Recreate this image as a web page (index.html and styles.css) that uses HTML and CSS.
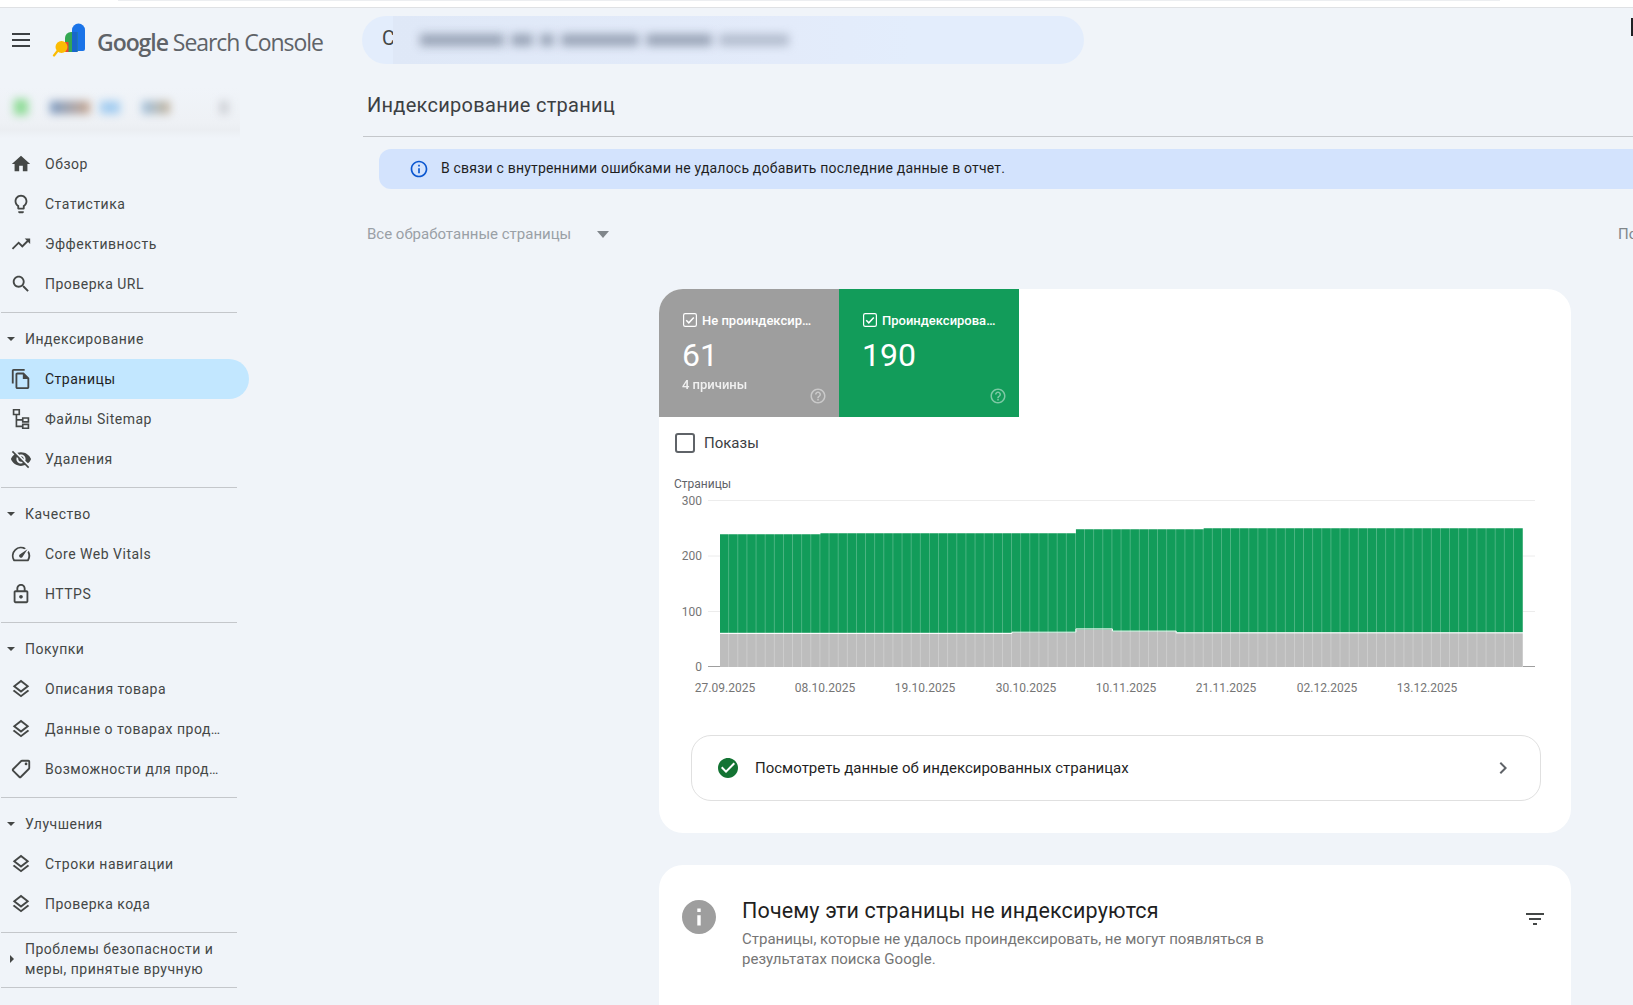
FILE: index.html
```html
<!DOCTYPE html>
<html lang="ru">
<head>
<meta charset="utf-8">
<title>Индексирование страниц</title>
<link rel="stylesheet" href="styles.css">
</head>
<body>
<svg class="sprite" aria-hidden="true">
  <symbol id="layers" viewBox="0 0 24 24"><path d="M11.99 18.54l-7.37-5.73L3 14.07l9 7 9-7-1.63-1.27-7.38 5.74zM12 16l7.36-5.73L21 9l-9-7-9 7 1.63 1.27L12 16zm0-11.47L17.74 9 12 13.47 6.26 9 12 4.53z"/></symbol>
  <symbol id="help" viewBox="0 0 24 24"><path d="M11 18h2v-2h-2v2zm1-16C6.48 2 2 6.48 2 12s4.48 10 10 10 10-4.48 10-10S17.52 2 12 2zm0 18c-4.41 0-8-3.59-8-8s3.59-8 8-8 8 3.59 8 8-3.59 8-8 8zm0-14c-2.21 0-4 1.79-4 4h2c0-1.1.9-2 2-2s2 .9 2 2c0 2-3 1.75-3 5h2c0-2.25 3-2.5 3-5 0-2.21-1.79-4-4-4z"/></symbol>
  <symbol id="tick" viewBox="0 0 14 14"><rect x=".6" y=".6" width="12.8" height="12.8" rx="1.6" fill="none" stroke="#fff" stroke-width="1.2"/><path d="M3.2 7.2l2.6 2.6 5-5.4" fill="none" stroke="#fff" stroke-width="1.5"/></symbol>
</svg>

<div class="tabstrip"><div class="tabstrip-shade"></div></div>

<header class="topbar">
  <div class="brand">
    <div class="burger"><span></span><span></span><span></span></div>
    <svg class="logo" viewBox="0 0 34 34" aria-hidden="true">
      <path d="M20 8a6.5 6.5 0 0 1 13 0v19a2 2 0 0 1-2 2H20z" fill="#1a73e8" transform="translate(0 -1)"/>
      <path d="M13 15a6 6 0 0 1 6-6h6.5v20H13z" fill="#34a853"/>
      <path d="M20 9h5.500v20H20z" fill="#1967c9"/>
      <path d="M13 19h3.500v10H13z" fill="#ea4335"/>
      <circle cx="9.500" cy="24" r="6" fill="#fbbc04"/>
      <path d="M5.500 28L2 32.500" stroke="#fbbc04" stroke-width="2.200" stroke-linecap="round"/>
    </svg>
    <div class="brand-name"><span class="brand-google">Google</span> Search Console</div>
  </div>
  <div class="search">
    <span class="search-letter">C</span>
    <div class="search-blur">
      <i class="blob blob-a"></i><i class="blob blob-b"></i><i class="blob blob-c"></i><i class="blob blob-d"></i><i class="blob blob-e"></i><i class="blob blob-f"></i>
    </div>
  </div>
  <div class="caret"></div>
</header>

<div class="app">
  <nav class="sidebar">
    <div class="account">
      <i class="acc acc-green"></i><i class="acc acc-a"></i><i class="acc acc-b"></i><i class="acc acc-c"></i><i class="acc acc-d"></i>
    </div>

    <a class="item"><svg class="icon" viewBox="0 0 24 24"><path d="M10 20v-6h4v6h5v-8h3L12 3 2 12h3v8z"/></svg><span class="label">Обзор</span></a>
    <a class="item"><svg class="icon" viewBox="0 0 24 24"><path d="M9 21c0 .55.45 1 1 1h4c.55 0 1-.45 1-1v-1H9v1zm3-19C8.140 2 5 5.140 5 9c0 2.380 1.190 4.470 3 5.740V17c0 .55.45 1 1 1h6c.55 0 1-.45 1-1v-2.260c1.810-1.270 3-3.360 3-5.740 0-3.860-3.140-7-7-7zm2.850 11.100l-.85.6V16h-4v-2.300l-.85-.6C7.800 12.160 7 10.630 7 9c0-2.760 2.240-5 5-5s5 2.240 5 5c0 1.630-.8 3.160-2.150 4.100z"/></svg><span class="label">Статистика</span></a>
    <a class="item"><svg class="icon" viewBox="0 0 24 24"><path d="M16 6l2.290 2.290-4.880 4.880-4-4L2 16.590 3.410 18l6-6 4 4 6.300-6.290L22 12V6z"/></svg><span class="label">Эффективность</span></a>
    <a class="item"><svg class="icon" viewBox="0 0 24 24"><path d="M15.500 14h-.79l-.28-.27C15.410 12.590 16 11.110 16 9.500 16 5.910 13.090 3 9.500 3S3 5.910 3 9.500 5.910 16 9.500 16c1.610 0 3.090-.59 4.230-1.570l.27.28v.79l5 4.990L20.490 19l-4.990-5zm-6 0C7.010 14 5 11.990 5 9.500S7.010 5 9.500 5 14 7.010 14 9.500 11.990 14 9.500 14z"/></svg><span class="label">Проверка URL</span></a>

    <hr class="rule">
    <div class="group"><i class="tri-down"></i><span>Индексирование</span></div>
    <a class="item active"><svg class="icon" viewBox="0 0 24 24"><path d="M16 1H4c-1.100 0-2 .9-2 2v14h2V3h12V1zm-1 4H8c-1.100 0-1.990.9-1.990 2L6 21c0 1.100.89 2 1.990 2H19c1.100 0 2-.9 2-2V11l-6-6zM8 21V7h6v5h5v9H8z"/></svg><span class="label">Страницы</span></a>
    <a class="item"><svg class="icon" viewBox="0 0 24 24"><path fill="none" stroke="#444746" stroke-width="1.800" d="M3.900 1.900h6.200v5.200H3.900zM13.900 10.900h6.200v4.200h-6.200zM13.900 17.900h6.200v4.200h-6.200zM7 7v13h6.900M7 13h6.900"/></svg><span class="label">Файлы Sitemap</span></a>
    <a class="item"><svg class="icon" viewBox="0 0 24 24"><path d="M12 7c2.760 0 5 2.240 5 5 0 .65-.13 1.260-.36 1.830l2.920 2.920c1.510-1.260 2.700-2.890 3.430-4.750-1.730-4.390-6-7.500-11-7.500-1.400 0-2.740.25-3.980.7l2.160 2.160C10.740 7.130 11.350 7 12 7zM2 4.270l2.280 2.280.46.46C3.080 8.300 1.780 10.020 1 12c1.730 4.390 6 7.500 11 7.500 1.550 0 3.030-.3 4.380-.84l.42.42L19.730 22 21 20.730 3.270 3 2 4.270zM7.530 9.800l1.550 1.550c-.05.21-.08.43-.08.65 0 1.660 1.340 3 3 3 .22 0 .44-.03.65-.08l1.550 1.550c-.67.33-1.410.53-2.200.53-2.760 0-5-2.240-5-5 0-.79.2-1.530.53-2.200zm4.310-.78l3.150 3.150.02-.16c0-1.660-1.340-3-3-3l-.17.01z"/></svg><span class="label">Удаления</span></a>

    <hr class="rule">
    <div class="group"><i class="tri-down"></i><span>Качество</span></div>
    <a class="item"><svg class="icon" viewBox="0 0 24 24"><path d="M20.380 8.570l-1.230 1.850a8 8 0 0 1-.22 7.580H5.070A8 8 0 0 1 15.580 6.850l1.850-1.230A10 10 0 0 0 3.350 19a2 2 0 0 0 1.720 1h13.850a2 2 0 0 0 1.740-1 10 10 0 0 0-.27-10.440zm-9.790 6.840a2 2 0 0 0 2.830 0l5.660-8.490-8.490 5.660a2 2 0 0 0 0 2.830z"/></svg><span class="label">Core Web Vitals</span></a>
    <a class="item"><svg class="icon" viewBox="0 0 24 24"><path d="M18 8h-1V6c0-2.760-2.240-5-5-5S7 3.240 7 6v2H6c-1.100 0-2 .9-2 2v10c0 1.100.9 2 2 2h12c1.100 0 2-.9 2-2V10c0-1.100-.9-2-2-2zM9 6c0-1.660 1.340-3 3-3s3 1.340 3 3v2H9V6zm9 14H6V10h12v10zm-6-3c1.100 0 2-.9 2-2s-.9-2-2-2-2 .9-2 2 .9 2 2 2z"/></svg><span class="label">HTTPS</span></a>

    <hr class="rule">
    <div class="group"><i class="tri-down"></i><span>Покупки</span></div>
    <a class="item"><svg class="icon"><use href="#layers"/></svg><span class="label">Описания товара</span></a>
    <a class="item"><svg class="icon"><use href="#layers"/></svg><span class="label">Данные о товарах продавца</span></a>
    <a class="item"><svg class="icon icon-flip" viewBox="0 0 24 24"><path d="M21.410 11.580l-9-9C12.050 2.220 11.550 2 11 2H4c-1.100 0-2 .9-2 2v7c0 .55.22 1.050.59 1.420l9 9c.36.36.86.58 1.410.58s1.050-.22 1.410-.59l7-7c.37-.36.59-.86.59-1.410s-.23-1.060-.59-1.420zM13 20.010L4 11V4h7v-.01l9 9-7 7.020z"/><circle cx="6.500" cy="6.500" r="1.500"/></svg><span class="label">Возможности для продавцов</span></a>

    <hr class="rule">
    <div class="group"><i class="tri-down"></i><span>Улучшения</span></div>
    <a class="item"><svg class="icon"><use href="#layers"/></svg><span class="label">Строки навигации</span></a>
    <a class="item"><svg class="icon"><use href="#layers"/></svg><span class="label">Проверка кода</span></a>

    <hr class="rule">
    <div class="group"><i class="tri-right"></i><span>Проблемы безопасности и<br>меры, принятые вручную</span></div>
    <hr class="rule rule-last">
  </nav>

  <main class="main">
    <h1 class="title">Индексирование страниц</h1>
    <div class="banner">
      <svg class="banner-icon" viewBox="0 0 24 24"><path d="M11 7h2v2h-2zm0 4h2v6h-2zm1-9C6.480 2 2 6.480 2 12s4.480 10 10 10 10-4.480 10-10S17.520 2 12 2zm0 18c-4.410 0-8-3.590-8-8s3.590-8 8-8 8 3.590 8 8-3.590 8-8 8z"/></svg>
      <span class="banner-text">В связи с внутренними ошибками не удалось добавить последние данные в отчет.</span>
    </div>
    <div class="filter">
      <span class="filter-name">Все обработанные страницы</span>
      <i class="filter-tri"></i>
      <span class="filter-right">По</span>
    </div>

    <section class="card">
      <div class="tabs">
        <div class="tab tab-gray">
          <div class="tab-head"><svg class="tab-check"><use href="#tick"/></svg><span class="tab-name">Не проиндексировано</span></div>
          <div class="tab-num">61</div>
          <div class="tab-sub">4 причины</div>
          <svg class="tab-help"><use href="#help"/></svg>
        </div>
        <div class="tab tab-green">
          <div class="tab-head"><svg class="tab-check"><use href="#tick"/></svg><span class="tab-name">Проиндексировано</span></div>
          <div class="tab-num">190</div>
          <svg class="tab-help"><use href="#help"/></svg>
        </div>
      </div>

      <label class="impressions"><i class="box"></i><span>Показы</span></label>

      <svg class="chart" viewBox="0 0 912 240" width="912" height="240">
        <defs>
          <pattern id="gaps" x="61" y="0" width="9.125" height="240" patternUnits="userSpaceOnUse">
            <rect x="8.400" width=".8" height="240" fill="#fff" fill-opacity=".32"/>
          </pattern>
        </defs>
        <text class="c-title" x="15" y="15">Страницы</text>
        <g class="c-grid">
          <path d="M49 27.500H876M49 83H876M49 138.500H876"/>
        </g>
        <path class="c-axis" d="M49 193.500H876"/>
        <g class="c-y">
          <text x="43" y="32">300</text>
          <text x="43" y="87">200</text>
          <text x="43" y="143">100</text>
          <text x="43" y="198">0</text>
        </g>
        <polygon class="c-green" points="61,61.300 161.400,61.300 161.400,60.200 416.900,60.200 416.900,56.300 544.600,56.300 544.600,55.200 864,55.200 864,160 61,160"/>
        <polygon class="c-gray" points="61,160.800 353,160.800 353,159.700 416.900,159.700 416.900,156.400 453.400,156.400 453.400,158.600 517.200,158.600 517.200,160.200 864,160.200 864,194 61,194"/>
        <polyline class="c-sep" points="61,160.300 353,160.300 353,159.200 416.900,159.200 416.900,155.900 453.400,155.900 453.400,158.100 517.200,158.100 517.200,159.700 864,159.700"/>
        <rect x="61" y="55" width="803" height="139" fill="url(#gaps)"/>
        <g class="c-x">
          <text x="66" y="219">27.09.2025</text>
          <text x="166" y="219">08.10.2025</text>
          <text x="266" y="219">19.10.2025</text>
          <text x="367" y="219">30.10.2025</text>
          <text x="467" y="219">10.11.2025</text>
          <text x="567" y="219">21.11.2025</text>
          <text x="668" y="219">02.12.2025</text>
          <text x="768" y="219">13.12.2025</text>
        </g>
      </svg>

      <a class="link-row">
        <svg class="link-ok" viewBox="2 2 20 20"><path d="M12 2C6.480 2 2 6.480 2 12s4.480 10 10 10 10-4.480 10-10S17.520 2 12 2zm-2 15l-5-5 1.410-1.410L10 14.170l7.590-7.590L19 8l-9 9z"/></svg>
        <span class="link-text">Посмотреть данные об индексированных страницах</span>
        <svg class="link-chev" viewBox="0 0 24 24"><path d="M10 6L8.590 7.410 13.170 12l-4.580 4.590L10 18l6-6z"/></svg>
      </a>
    </section>

    <section class="card card-why">
      <svg class="why-icon" viewBox="2 2 20 20"><path d="M12 2C6.480 2 2 6.480 2 12s4.480 10 10 10 10-4.480 10-10S17.520 2 12 2zm1 15h-2v-6h2v6zm0-8h-2V7h2v2z"/></svg>
      <div class="why-body">
        <h2 class="why-title">Почему эти страницы не индексируются</h2>
        <p class="why-text">Страницы, которые не удалось проиндексировать, не могут появляться в результатах поиска Google.</p>
      </div>
      <svg class="why-filter" viewBox="0 0 24 24"><path d="M10 18h4v-2h-4v2zM3 6v2h18V6H3zm3 7h12v-2H6v2z"/></svg>
    </section>
  </main>
</div>
</body>
</html>
```

FILE: styles.css
```css
* { box-sizing: border-box; }

html, body {
  margin: 0;
  height: 1005px;
  overflow: hidden;
  background: #f0f4f9;
  font-family: Roboto, "Noto Sans", sans-serif;
  color: #1f1f1f;
}

.sprite { display: none; }

/* browser strip */
.tabstrip {
  height: 8px;
  background: #fff;
  border-bottom: 1px solid #dfe1e4;
}
.tabstrip-shade {
  height: 1px;
  margin: 0 133px 0 118px;
  background: #eceef1;
}

/* top bar */
.topbar {
  display: flex;
  align-items: center;
  height: 64px;
  position: relative;
}
.brand {
  display: flex;
  align-items: center;
  width: 362px;
  padding-left: 12px;
}
.burger {
  display: flex;
  flex-direction: column;
  gap: 4px;
  width: 18px;
}
.burger span {
  display: block;
  height: 2px;
  background: #3c4043;
}
.logo {
  width: 34px;
  height: 34px;
  margin-left: 22px;
  flex: none;
}
.brand-name {
  margin: 4px 0 0 11px;
  font-family: "Open Sans", sans-serif;
  font-size: 23px;
  letter-spacing: -1.05px;
  color: #5f6368;
  white-space: nowrap;
}
.brand-google { font-weight: 600; }

.search {
  display: flex;
  align-items: center;
  width: 722px;
  height: 48px;
  border-radius: 24px;
  background: #e3edfc;
  padding-left: 20px;
  overflow: hidden;
}
.search-letter {
  width: 11px;
  height: 24px;
  margin-top: -4px;
  overflow: hidden;
  font-size: 20px;
  line-height: 24px;
  color: #444746;
}
.search-blur {
  display: flex;
  align-items: center;
  gap: 7px;
  width: 520px;
  height: 48px;
  padding-left: 27px;
  background: linear-gradient(90deg, #dfe8f7, #e3ebfa 75%, #e3edfc);
}
.blob {
  display: block;
  height: 12px;
  background: #8d98ab;
  filter: blur(5px);
  opacity: .85;
}
.blob-a { width: 84px; }
.blob-b { width: 22px; }
.blob-c { width: 14px; }
.blob-d { width: 78px; }
.blob-e { width: 66px; }
.blob-f { width: 70px; opacity: .55; }

.caret {
  position: absolute;
  right: 0;
  top: 10px;
  width: 2px;
  height: 18px;
  background: #202124;
}

/* layout */
.app {
  display: flex;
  height: 933px;
}
.sidebar {
  flex: none;
  width: 363px;
  overflow: hidden;
}
.main {
  flex: 1;
  min-width: 0;
  overflow: hidden;
}

/* sidebar */
.account {
  display: flex;
  align-items: center;
  width: 240px;
  height: 72px;
  padding: 0 0 2px 14px;
  background: linear-gradient(180deg, #f0f4f9 20%, #eef1f5 70%, #ebeef2 80%, #f0f4f9 92%);
}
.acc {
  display: block;
  height: 13px;
  filter: blur(4.5px);
}
.acc-green { width: 14px; height: 16px; background: #8fdc97; }
.acc-a { width: 40px; margin-left: 22px; background: linear-gradient(90deg, #7b9cc4, #c7a58e); }
.acc-b { width: 20px; margin-left: 10px; background: #a4cdf0; }
.acc-c { width: 28px; margin-left: 22px; background: linear-gradient(90deg, #9fc0de, #c4b49c); }
.acc-d { width: 8px; margin-left: 50px; background: #c9ccd1; }

.item {
  display: flex;
  align-items: center;
  gap: 13px;
  width: 249px;
  height: 40px;
  padding: 0 24px 0 10px;
  border-radius: 0 20px 20px 0;
  color: #444746;
  font-size: 14px;
  letter-spacing: .5px;
}
.item.active { background: #c2e7ff; color: #1f1f1f; }
.icon {
  flex: none;
  width: 22px;
  height: 22px;
  fill: #444746;
}
.icon-flip { transform: scaleX(-1); }
.label {
  min-width: 0;
  overflow: hidden;
  white-space: nowrap;
  text-overflow: ellipsis;
}
.rule {
  width: 236px;
  height: 1px;
  margin: 8px 0 6px 1px;
  border: 0;
  background: #c4c7cb;
}
.rule-last { margin-bottom: 0; }
.group {
  display: flex;
  align-items: center;
  min-height: 40px;
  padding-left: 7px;
  color: #444746;
  font-size: 14px;
  line-height: 20px;
  letter-spacing: .5px;
}
.group span { margin-left: 10px; }
.tri-down {
  flex: none;
  width: 0;
  height: 0;
  margin-right: 0;
  border-left: 4px solid transparent;
  border-right: 4px solid transparent;
  border-top: 4px solid #444746;
}
.tri-right {
  flex: none;
  width: 0;
  height: 0;
  margin-left: 3px;
  margin-right: 5px;
  border-top: 4px solid transparent;
  border-bottom: 4px solid transparent;
  border-left: 4px solid #444746;
}
.group .tri-right + span { margin-left: 6px; }

/* main head */
.title {
  margin: 0;
  height: 65px;
  padding: 20px 0 0 4px;
  border-bottom: 1px solid #c4c7cb;
  font-size: 20px;
  font-weight: 400;
  line-height: 26px;
  letter-spacing: .28px;
  color: #3c4043;
}
.banner {
  display: flex;
  align-items: center;
  height: 40px;
  margin: 12px 0 0 16px;
  padding-left: 30px;
  border-radius: 12px 0 0 12px;
  background: #d3e3fd;
  font-size: 14px;
  letter-spacing: .2px;
  color: #1f1f1f;
}
.banner-text { margin-top: -2px; }
.banner-icon {
  width: 20px;
  height: 20px;
  margin-right: 12px;
  fill: #0b57d0;
}
.filter {
  display: flex;
  align-items: center;
  height: 48px;
  margin-top: 21px;
  padding-left: 4px;
}
.filter-name {
  font-size: 15px;
  color: #9aa0a6;
}
.filter-tri {
  width: 0;
  height: 0;
  margin-left: 26px;
  border-left: 6.500px solid transparent;
  border-right: 6.500px solid transparent;
  border-top: 7px solid #80868b;
}
.filter-right {
  margin-left: auto;
  font-size: 15px;
  color: #80868b;
  width: 15px;
  overflow: hidden;
  white-space: nowrap;
}

/* report card */
.card {
  width: 912px;
  margin: 31px 0 0 296px;
  padding-bottom: 32px;
  border-radius: 24px;
  background: #fff;
}
.tabs { display: flex; }
.tab {
  position: relative;
  display: flex;
  flex-direction: column;
  width: 180px;
  height: 128px;
  padding: 22px 20px 0 24px;
  color: #fff;
}
.tab-gray { background: #9e9e9e; border-top-left-radius: 24px; padding-right: 22px; }
.tab-green { background: #129c5a; }
.tab-head {
  display: flex;
  align-items: center;
  gap: 5px;
  height: 18px;
}
.tab-check { flex: none; width: 14px; height: 14px; }
.tab-name {
  min-width: 0;
  overflow: hidden;
  white-space: nowrap;
  text-overflow: ellipsis;
  font-size: 13px;
  font-weight: 500;
}
.tab-num {
  margin: 5px 0 0 -1px;
  font-size: 32px;
  line-height: 42px;
}
.tab-sub {
  margin: 1px 0 0 -1px;
  font-size: 13px;
  font-weight: 500;
  line-height: 16px;
  opacity: .85;
}
.tab-help {
  position: absolute;
  right: 12px;
  bottom: 12px;
  width: 18px;
  height: 18px;
  fill: #fff;
  opacity: .45;
}
.impressions {
  display: flex;
  align-items: center;
  gap: 9px;
  margin: 16px 0 0 16px;
  height: 20px;
  font-size: 15px;
  color: #3c4043;
}
.box {
  width: 20px;
  height: 20px;
  border: 2px solid #5f6368;
  border-radius: 3px;
}
.chart {
  display: block;
  margin-top: 20px;
  font-family: Roboto, sans-serif;
}
.c-title { font-size: 12px; fill: #5f6368; }
.c-grid path { stroke: #ececec; stroke-width: 1; fill: none; }
.c-axis { stroke: #9e9e9e; stroke-width: 1; fill: none; }
.c-y text { font-size: 12px; fill: #757575; text-anchor: end; }
.c-x text { font-size: 12px; fill: #757575; text-anchor: middle; }
.c-green { fill: #129c5a; }
.c-gray { fill: #bdbdbd; }
.c-sep { fill: none; stroke: #fff; stroke-width: 1; }

.link-row {
  display: flex;
  align-items: center;
  width: 850px;
  height: 66px;
  margin: 22px 0 0 32px;
  padding: 0 25px 0 26px;
  border: 1px solid #e0e0e0;
  border-radius: 20px;
}
.link-ok { flex: none; width: 20px; height: 20px; fill: #137333; }
.link-text {
  flex: 1;
  margin-left: 17px;
  font-size: 15px;
  color: #1f1f1f;
}
.link-chev { flex: none; width: 24px; height: 24px; fill: #5f6368; }

.card-why {
  display: flex;
  align-items: flex-start;
  height: 300px;
  margin-top: 32px;
  padding: 35px 24px 0 23px;
}
.why-icon { flex: none; width: 34px; height: 34px; fill: #9e9e9e; }
.why-body { flex: none; width: 530px; margin: -2px 0 0 26px; }
.why-title {
  margin: 0;
  font-size: 21.500px;
  font-weight: 400;
  line-height: 26px;
  letter-spacing: .14px;
  color: #1f1f1f;
}
.why-text {
  margin: 5px 0 0;
  font-size: 15px;
  line-height: 20px;
  color: #757575;
}
.why-filter {
  flex: none;
  width: 24px;
  height: 24px;
  margin: 7px 0 0 auto;
  fill: #444746;
}
```
